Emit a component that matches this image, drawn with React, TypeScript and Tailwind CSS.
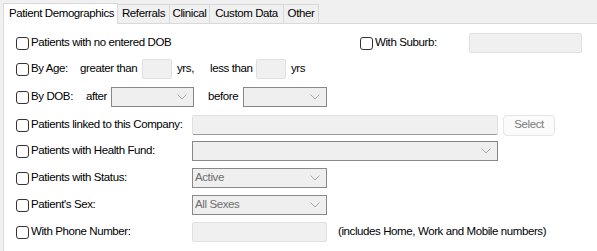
import React from "react";

const font = { fontFamily: "'Liberation Sans', Arial, sans-serif" };

function Check() {
  return (
    <span className="inline-block w-[13px] h-[13px] rounded-[3px] border border-[#333333] bg-white shrink-0" />
  );
}

function Chevron() {
  return (
    <svg width="10" height="6" viewBox="0 0 10 6" className="shrink-0">
      <polyline points="0.5,0.5 5,5 9.5,0.5" fill="none" stroke="#a8a8a8" strokeWidth="1" />
    </svg>
  );
}

function SelectBox({ w, value }: { w: string; value?: string }) {
  return (
    <div className={`${w} h-[20px] bg-[#efefef] border border-[#888888] flex items-center justify-between pl-[2px] pr-[6px]`}>
      <span className="text-[#6d6d6d] whitespace-nowrap">{value ?? ""}</span>
      <Chevron />
    </div>
  );
}

function Input({ w }: { w: string }) {
  return <div className={`${w} h-[20px] bg-[#f0f0f0] border border-[#e0e0e0] rounded-[2px]`} />;
}

function Label({ text, w }: { text: string; w: string }) {
  return (
    <div className={`flex items-center ${w} shrink-0`}>
      <Check />
      <span className="ml-[2px] whitespace-nowrap">{text}</span>
    </div>
  );
}

export default function App() {
  return (
    <div
      className="w-[597px] h-[251px] bg-[#f0f0f0] text-[11.5px] tracking-[-0.4px] text-black overflow-hidden flex flex-col"
      style={font}
    >
      {/* tabs */}
      <div className="flex items-end h-[23px] pl-[3px] pt-[2px] whitespace-nowrap">
        <div className="w-[115px] h-[21px] bg-white border border-b-0 border-[#d9d9d9] flex items-center pl-[5px] relative top-[1px] z-10">
          Patient Demographics
        </div>
        <div className="w-[52px] h-[19px] border-t border-r border-[#d9d9d9] flex items-center justify-center">Referrals</div>
        <div className="w-[40px] h-[19px] border-t border-r border-[#d9d9d9] flex items-center justify-center">Clinical</div>
        <div className="w-[74px] h-[19px] border-t border-r border-[#d9d9d9] flex items-center justify-center">Custom Data</div>
        <div className="w-[35px] h-[19px] border-t border-r border-[#d9d9d9] flex items-center justify-center">Other</div>
      </div>
      {/* panel */}
      <div className="flex-1 ml-[3px] bg-white border-t border-l border-[#d9d9d9] pl-[12px] pt-[9px] flex flex-col">
        <div className="flex items-center h-[20px]">
          <Label text="Patients with no entered DOB" w="w-[344px]" />
          <Label text="With Suburb:" w="w-[109px]" />
          <Input w="w-[113px]" />
        </div>
        <div className="flex items-center h-[20px] mt-[6px]">
          <Label text="By Age:" w="w-[64px]" />
          <span className="w-[62px] shrink-0">greater than</span>
          <Input w="w-[30px]" />
          <span className="ml-[5px] w-[33px] shrink-0">yrs,</span>
          <span className="w-[46px] shrink-0">less than</span>
          <Input w="w-[30px]" />
          <span className="ml-[5px]">yrs</span>
        </div>
        <div className="flex items-center h-[20px] mt-[8px]">
          <Label text="By DOB:" w="w-[70px]" />
          <span className="w-[25px] shrink-0">after</span>
          <SelectBox w="w-[83px]" />
          <span className="ml-[14px] w-[35px] shrink-0">before</span>
          <SelectBox w="w-[84px]" />
        </div>
        <div className="flex items-center h-[20px] mt-[8px]">
          <Label text="Patients linked to this Company:" w="w-[176px]" />
          <div className="w-[306px] h-[20px] bg-[#f0f0f0] border border-[#e0e0e0] border-b-[#9a9a9a] rounded-[2px]" />
          <div className="ml-[5px] w-[52px] h-[21px] bg-[#fbfbfb] border border-[#e5e5e5] rounded-[4px] flex items-center justify-center text-[#7a7a7a]">
            Select
          </div>
        </div>
        <div className="flex items-center h-[20px] mt-[6px]">
          <Label text="Patients with Health Fund:" w="w-[176px]" />
          <SelectBox w="w-[306px]" />
        </div>
        <div className="flex items-center h-[20px] mt-[7px]">
          <Label text="Patients with Status:" w="w-[176px]" />
          <SelectBox w="w-[135px]" value="Active" />
        </div>
        <div className="flex items-center h-[20px] mt-[7px]">
          <Label text="Patient's Sex:" w="w-[176px]" />
          <SelectBox w="w-[135px]" value="All Sexes" />
        </div>
        <div className="flex items-center h-[20px] mt-[7px]">
          <Label text="With Phone Number:" w="w-[176px]" />
          <Input w="w-[135px]" />
          <span className="ml-[11px]">(includes Home, Work and Mobile numbers)</span>
        </div>
      </div>
    </div>
  );
}
